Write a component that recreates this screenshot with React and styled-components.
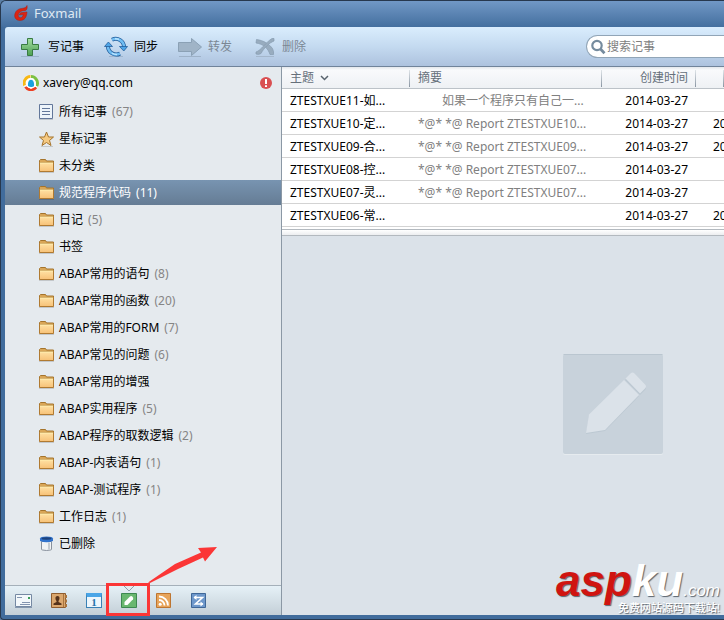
import React, { useState } from "react";
import styled, { createGlobalStyle, css } from "styled-components";

const GlobalStyle = createGlobalStyle`
  *, *::before, *::after { box-sizing: border-box; }
  body {
    margin: 0;
    background: #5b7fa6;
    font: 12px/16px "Noto Sans", "Noto Sans CJK SC", sans-serif;
    color: #000;
  }
  button, input { font: inherit; color: inherit; }
`;

/* window frame */
const Window = styled.div`
  position: relative;
  display: flex;
  flex-direction: column;
  min-height: 100vh;
  overflow: hidden;
  padding: 0 0 4px 4px;
  border: solid #27384e;
  border-width: 1px 0 1px 1px;
  border-radius: 6px 0 0 4px;
  background: #416c9c;
`;

const TitleBar = styled.header`
  display: flex;
  align-items: center;
  gap: 5px;
  height: 26px;
  margin-left: -4px;
  padding: 0 0 2px 12px;
  background: linear-gradient(#7198c6, #446f9f);
`;

const Title = styled.h1`
  margin: 0;
  font-size: 13px;
  font-weight: 400;
  color: #dfe9f3;
`;

/* toolbar */
const Toolbar = styled.div`
  display: flex;
  align-items: center;
  gap: 20px;
  height: 40px;
  padding-left: 13px;
  border-bottom: 1px solid #70839a;
  border-top-left-radius: 3px;
  background: linear-gradient(#daedfd, #c4daf0 50%, #adc2de);
`;

const ToolButton = styled.button`
  display: flex;
  align-items: center;
  gap: 6px;
  padding: 0;
  border: 0;
  background: none;
  white-space: nowrap;
  &:disabled { color: #7b8794; }
`;

const SearchBox = styled.label`
  display: flex;
  align-items: center;
  width: 138px;
  height: 23px;
  margin-left: auto;
  padding-left: 4px;
  border: 1px solid #91a5b7;
  border-right: 0;
  border-radius: 12px 0 0 12px;
  background: #fff;
`;

const SearchInput = styled.input`
  flex: 1;
  min-width: 0;
  padding: 0;
  border: 0;
  outline: 0;
  background: none;
  &::placeholder { color: #808080; opacity: 1; }
`;

/* body */
const Body = styled.div`
  display: flex;
  flex: 1;
`;

const Sidebar = styled.aside`
  display: flex;
  flex-direction: column;
  flex: 0 0 277px;
  border-right: 1px solid #8b98a5;
  background: #e5eaee;
`;

const Account = styled.div`
  display: flex;
  align-items: center;
  gap: 4px;
  height: 32px;
  padding: 0 9px 0 18px;
`;

const AccountName = styled.span`
  flex: 1;
`;

const FolderList = styled.ul`
  display: flex;
  flex-direction: column;
  gap: 2px;
  flex: 1;
  margin: 0;
  padding: 0;
  list-style: none;
`;

const Count = styled.span`
  margin-left: 1px;
  color: #858585;
`;

const FolderButton = styled.button`
  display: flex;
  align-items: center;
  gap: 4px;
  width: 100%;
  height: 25px;
  padding: 0 0 0 34px;
  border: 0;
  background: none;
  text-align: left;

  ${(p) => p.$active && css`
    background: linear-gradient(#7894b1, #657c94);
    color: #fff;
    ${Count} { color: #fff; }
  `}
`;

const ModuleBar = styled.nav`
  display: flex;
  align-items: center;
  gap: 11px;
  height: 30px;
  padding-left: 7px;
  border-top: 1px solid #a5b0b9;
  background: linear-gradient(#e6f1f7, #c3cfd7);
`;

const ModuleButton = styled.button`
  position: relative;
  display: grid;
  place-items: center;
  width: 24px;
  height: 29px;
  padding: 0;
  border: 0;
  background: none;
`;

const Notch = styled.svg`
  position: absolute;
  top: 0;
  left: 6px;
`;

/* red call-out laid over the active module */
const Highlight = styled.span`
  position: absolute;
  inset: -3px -9px -1px -11px;
  border: 3px solid #fb3636;
`;

const Arrow = styled.svg`
  position: absolute;
  left: 31px;
  bottom: 31px;
`;

/* note list */
const Main = styled.main`
  display: flex;
  flex: 1;
  flex-direction: column;
  min-width: 0;
  background: #dbe2e9;
`;

const NoteTable = styled.table`
  width: 100%;
  table-layout: fixed;
  border-collapse: separate;
  border-spacing: 0;
  background: #fff;
`;

const Col = styled.col`
  width: ${(p) => p.$width || "auto"};
`;

const HeadCell = styled.th`
  height: 22px;
  padding: 0 8px;
  border-bottom: 1px solid #bcc2c8;
  background:
    linear-gradient(#dfe4e8, #8995a2) no-repeat right 3px / 1px 17px,
    linear-gradient(#e3e7eb, #f9fafc 3px, #eef1f4);
  font-weight: 400;
  text-align: ${(p) => p.$align || "left"};
  color: #66707a;
`;

const SortButton = styled.button`
  display: flex;
  align-items: center;
  gap: 6px;
  padding: 0;
  border: 0;
  background: none;
`;

const Cell = styled.td`
  height: 23px;
  padding: 2px 8px 0;
  overflow: hidden;
  border-bottom: 1px solid #d3d3d3;
  white-space: nowrap;
  text-align: ${(p) => p.$align || "left"};
  color: ${(p) => (p.$muted ? "#808080" : "#000")};
`;

const ModifiedCell = styled(Cell)`
  padding: 2px 0 0 17px;
`;

const Splitter = styled.div`
  height: 7px;
  margin-top: 2px;
  border: solid #b3b9bf;
  border-width: 1px 0;
  background: linear-gradient(#fff, #eceef0);
`;

const ListArea = styled.div`
  background: #fff;
`;

const Preview = styled.section`
  display: grid;
  flex: 1;
  place-items: center;
  padding: 0 0 42px 220px;
`;

const Watermark = styled.div`
  position: absolute;
  right: 4px;
  bottom: 4px;
  display: flex;
  flex-direction: column;
  align-items: flex-end;
  font-family: "Liberation Sans", "Noto Sans CJK SC", sans-serif;
  color: #fff;
  text-shadow: 1px 1px 1px #59636d;
`;

const Brand = styled.div`
  font-size: 44px;
  line-height: 20px;
  font-weight: 700;
  font-style: italic;
`;

const BrandRed = styled.span`
  color: #d01410;
`;

const BrandSmall = styled.span`
  font-size: 17px;
  font-weight: 400;
`;

const Slogan = styled.div`
  position: relative;
  font-size: 11px;
  line-height: 14px;
  font-weight: 500;
`;

/* icons */
const FoxLogo = () => (
  <svg width="16" height="16" viewBox="0 0 16 16" aria-hidden="true">
    <path d="M14 .5C13.500 2 12 3.200 9 3.400 5.500 3.500 3 5.500 2 8.500.800 12.500 3 15.500 7 15.500c4.500 0 6.500-3 7-8.500L7.500 7.800 6.300 10l4-.5c-.5 2.300-1.500 3.300-3 3.200C5 12.500 4.800 10 6 8c1.500-2.300 4-2.300 6.500-2.500C14 5 14.500 2.500 14 .5Z" fill="#dc2412" stroke="#b01c10" strokeWidth=".5" />
  </svg>
);

const PlusIcon = () => (
  <svg width="24" height="24" viewBox="0 0 24 24" aria-hidden="true">
    <defs>
      <linearGradient id="plus" x1="0" y1="0" x2="0" y2="1">
        <stop stopColor="#a3dda2" /><stop offset="1" stopColor="#4da152" />
      </linearGradient>
    </defs>
    <path d="M3 21.5h18" stroke="#9db4cd" />
    <path d="M9.5 3.5h5v6h6v5h-6v6h-5v-6h-6v-5h6z" fill="url(#plus)" stroke="#397a43" />
  </svg>
);

const SyncIcon = () => (
  <svg width="24" height="24" viewBox="0 0 24 24" aria-hidden="true">
    <path d="M5 21.5h14" stroke="#9db4cd" />
    <g fill="none">
      <path d="M8 4.7a8.3 8.3 0 0 1 12 7.6M16 18.6A8.3 8.3 0 0 1 4 11" stroke="#245f9c" strokeWidth="4" />
      <path d="M8 4.7a8.3 8.3 0 0 1 12 7.6M16 18.6A8.3 8.3 0 0 1 4 11" stroke="#70bdf2" strokeWidth="2.4" />
      <path d="M11 3.8a8 8 0 0 1 4 .6M13 19.4a8 8 0 0 1-5-1.4" stroke="#b9e4ff" strokeWidth="1.5" />
    </g>
    <path d="M15.5 11.5h8L19.8 16zM.5 11.5h8L4.4 7z" fill="#4da5e8" stroke="#245f9c" strokeWidth=".8" />
  </svg>
);

const ForwardIcon = () => (
  <svg width="24" height="24" viewBox="0 0 24 24" aria-hidden="true">
    <path d="M1 21.5h22" stroke="#9eb2c8" />
    <path d="M.5 7.500h13v-4l10 8.500-10 8.500v-4H.5z" fill="#a0b4c7" stroke="#8ba1b5" />
  </svg>
);

const DeleteIcon = () => (
  <svg width="24" height="24" viewBox="0 0 24 24" aria-hidden="true">
    <path d="M4 21.500h18" stroke="#a4b7cc" />
    <path d="M4.500 4.500C12 5.500 17 9 20.500 13.500q1.500 3 1 6h-3.500C16 13 11 9 4 8z" fill="#98acbf" stroke="#879cb0" strokeWidth=".7" />
    <path d="M20 3.500h2v2.500C17 8 12 13 9 18.500q-2.500 1.500-5 .5v-2C9 15.500 14 7 20 3.500z" fill="#98acbf" stroke="#879cb0" strokeWidth=".7" />
  </svg>
);

const SearchIcon = () => (
  <svg width="16" height="16" viewBox="0 0 16 16" aria-hidden="true">
    <circle cx="6" cy="6.500" r="4.700" fill="none" stroke="#758b9e" strokeWidth="2.200" />
    <path d="m9.500 10 4 4.200" stroke="#758b9e" strokeWidth="2.800" />
  </svg>
);

const MailLogo = () => (
  <svg width="16" height="16" viewBox="0 0 16 16" aria-hidden="true">
    <circle cx="8" cy="8" r="7.500" fill="#fff" />
    <g fill="none" strokeWidth="3">
      <path d="M1.600 10.500A6.500 6.500 0 0 1 7.500 1.600" stroke="#f8b814" />
      <path d="M8 1.600a6.500 6.500 0 0 1 5.700 9.500" stroke="#7dc142" />
      <path d="M2.500 11.800a6.500 6.500 0 0 0 10.500.500" stroke="#ed4023" />
    </g>
    <path d="M3.500 11.500C3.500 6 5 3 8 3s5 3 5 8.500L8 14z" fill="#fff" />
    <path d="M8 4.800c-2.400 0-3.300 3-3 6.200 1.500 1.400 4.700 1.400 6 0 .3-3.200-.6-6.200-3-6.200z" fill="#18a2df" />
  </svg>
);

const AlertIcon = () => (
  <svg width="12" height="12" viewBox="0 0 12 12" role="img" aria-label="错误">
    <circle cx="6" cy="6" r="6" fill="#d94f51" />
    <path d="M6 2v5M6 8.300v1.800" stroke="#fff" strokeWidth="2" />
  </svg>
);

const FolderIcon = () => (
  <svg width="16" height="16" viewBox="0 0 16 16" aria-hidden="true">
    <defs>
      <linearGradient id="folder" x1="0" y1="0" x2="0" y2="1">
        <stop stopColor="#ffe2a5" /><stop offset="1" stopColor="#f7c177" />
      </linearGradient>
    </defs>
    <path d="M0 14.500h15" stroke="#000" strokeOpacity=".15" />
    <path d="M.5 13V2.500l1-1h5l1 1.500h7v10z" fill="#d9a657" stroke="#a5742c" />
    <path d="M.5 4.500h14v9H.5z" fill="url(#folder)" stroke="#b07a31" />
    <path d="M1 5h13" stroke="#fff0b0" />
  </svg>
);

const NoteIcon = () => (
  <svg width="16" height="16" viewBox="0 0 16 16" aria-hidden="true">
    <path d="M.5.500h13v14H.5z" fill="#edf4fa" stroke="#62779a" />
    <path d="M3 4.500h8M3 7.500h8M3 10.500h8" stroke="#62779a" />
    <path d="M0 15.500h14" stroke="#bfc6cd" />
  </svg>
);

const StarIcon = () => (
  <svg width="16" height="16" viewBox="0 0 16 16" aria-hidden="true">
    <path d="M2 15.500h12" stroke="#c3c8cc" />
    <path d="m7.500 1 2 5h5l-4 3.500 1.500 5-4.500-3-4.500 3 1.500-5-4-3.500h5z" fill="#f5ca83" stroke="#a5742c" strokeLinejoin="round" />
  </svg>
);

const TrashIcon = () => (
  <svg width="16" height="16" viewBox="0 0 16 16" aria-hidden="true">
    <path d="M2.500 5.500v7.500q0 1 1 1 4 1 8 0 1 0 1-1V5.500z" fill="#f1f3f5" stroke="#88919d" />
    <path d="M10 6.500v7" stroke="#c5cbd2" strokeWidth="2" />
    <path d="M1 2.500Q1 .500 7.500.500T14 2.500V5q-6.500 2.500-13 0z" fill="#3274cd" />
    <ellipse cx="7.500" cy="2.500" rx="5" ry="1.200" fill="#1e437d" />
  </svg>
);

const MailIcon = () => (
  <svg width="18" height="16" viewBox="0 0 18 16" aria-hidden="true">
    <path d="M.5 1.500h16v12H.5z" fill="#f3f8fb" stroke="#7589a3" />
    <path d="M2 4.500h5M7 9.500h8M5 11.500h10" stroke="#8395b0" />
    <path d="M13 4h2v2h-2z" fill="#3b9f59" />
    <path d="M0 14.500h17" stroke="#8497ae" />
  </svg>
);

const ContactsIcon = () => (
  <svg width="16" height="16" viewBox="0 0 16 16" aria-hidden="true">
    <path d="M.5.500h14v14H.5z" fill="#dba76d" stroke="#8f5d2f" />
    <path d="M12.500 1v13" stroke="#a8743e" />
    <path d="M14 2h2v3h-2zM14 6.500h2v3h-2zM14 11h2v3h-2z" fill="#a8743e" />
    <path d="M6.500 3C4 3 4 6 5.500 8v1L2.500 10.500V12h8v-1.500L7.500 9V8C9 6 9 3 6.500 3z" fill="#56331b" />
  </svg>
);

const DayNumber = styled.span`
  display: grid;
  place-items: center;
  width: 16px;
  height: 15px;
  border: 1px solid #3981b5;
  border-top: 4px solid #4aa5e7;
  background: #edf6fc;
  font: 700 11px/10px "Liberation Serif", serif;
  color: #2674aa;
`;

const MemoIcon = () => (
  <svg width="16" height="16" viewBox="0 0 16 16" aria-hidden="true">
    <path d="M.5.500h15v14H.5z" fill="#69b770" stroke="#3d8851" />
    <path d="M3.500 12V9L9 3.500q1.200-1 2.500.2t.5 2.600L6.500 12z" fill="#fff" />
  </svg>
);

const RssIcon = () => (
  <svg width="16" height="16" viewBox="0 0 16 16" aria-hidden="true">
    <path d="M.5.500h14v14H.5z" fill="#e7a45a" stroke="#bd7531" />
    <circle cx="4.200" cy="11.200" r="1.500" fill="#fff" />
    <path d="M3 7a5.500 5.500 0 0 1 5.500 5.500M3 3.500a9 9 0 0 1 9 9" fill="none" stroke="#fff" strokeWidth="1.800" />
  </svg>
);

const ExchangeIcon = () => (
  <svg width="16" height="16" viewBox="0 0 16 16" aria-hidden="true">
    <path d="M.5.500h14v14H.5z" fill="#6e98cb" stroke="#3f6798" />
    <path d="M3 4.500h8.500l-7 6.500H12" fill="none" stroke="#fff" strokeWidth="1.600" />
    <path d="M2.500 4.500 5.500 2v5zM12.500 11l-3-2.500v5z" fill="#fff" />
  </svg>
);

const PreviewIcon = () => (
  <svg width="100" height="101" viewBox="0 0 100 101" aria-hidden="true">
    <rect width="100" height="101" rx="2" fill="#e6ebef" />
    <rect width="100" height="100" rx="2" fill="#c8d2db" />
    <path d="M.5.500h99" stroke="#bac6d0" />
    <g fill="#bcc8d2">
      <path d="M26 62 61 27l15 15-34 35-19 3z" />
      <path d="m62 26 5-5q2-2 4 0l11 11q2 2 0 4l-5 5z" />
    </g>
    <g fill="#dbe2e9">
      <path d="M26 60.500 61 26l15 15-34 35-19 3z" />
      <path d="m62.500 24.500 5-5q2-2 4 0L82 30.500q2 2 0 4l-5 5z" />
    </g>
  </svg>
);

const folders = [
  { name: "所有记事", count: 67, Icon: NoteIcon },
  { name: "星标记事", Icon: StarIcon },
  { name: "未分类" },
  { name: "规范程序代码", count: 11 },
  { name: "日记", count: 5 },
  { name: "书签" },
  { name: "ABAP常用的语句", count: 8 },
  { name: "ABAP常用的函数", count: 20 },
  { name: "ABAP常用的FORM", count: 7 },
  { name: "ABAP常见的问题", count: 6 },
  { name: "ABAP常用的增强" },
  { name: "ABAP实用程序", count: 5 },
  { name: "ABAP程序的取数逻辑", count: 2 },
  { name: "ABAP-内表语句", count: 1 },
  { name: "ABAP-测试程序", count: 1 },
  { name: "工作日志", count: 1 },
  { name: "已删除", Icon: TrashIcon },
];

const notes = [
  { title: "ZTESTXUE11-如...", summary: "\u3000\u3000如果一个程序只有自己一...", created: "2014-03-27" },
  { title: "ZTESTXUE10-定...", summary: "*@* *@ Report ZTESTXUE10...", created: "2014-03-27", modified: "2014-03-27" },
  { title: "ZTESTXUE09-合...", summary: "*@* *@ Report ZTESTXUE09...", created: "2014-03-27", modified: "2014-03-27" },
  { title: "ZTESTXUE08-控...", summary: "*@* *@ Report ZTESTXUE07...", created: "2014-03-27" },
  { title: "ZTESTXUE07-灵...", summary: "*@* *@ Report ZTESTXUE07...", created: "2014-03-27" },
  { title: "ZTESTXUE06-常...", summary: "", created: "2014-03-27", modified: "2014-03-27" },
];

const tools = [
  { label: "写记事", Icon: PlusIcon },
  { label: "同步", Icon: SyncIcon },
  { label: "转发", Icon: ForwardIcon, disabled: true },
  { label: "删除", Icon: DeleteIcon, disabled: true },
];

const modules = [
  { label: "邮件", Icon: MailIcon },
  { label: "联系人", Icon: ContactsIcon },
  { label: "日历", Icon: () => <DayNumber>1</DayNumber> },
  { label: "记事", Icon: MemoIcon, active: true },
  { label: "订阅", Icon: RssIcon },
  { label: "同步", Icon: ExchangeIcon },
];

function FolderTree() {
  const [selected, setSelected] = useState("规范程序代码");
  return (
    <FolderList>
      {folders.map(({ name, count, Icon = FolderIcon }) => (
        <li key={name}>
          <FolderButton type="button" $active={name === selected} onClick={() => setSelected(name)}>
            <Icon />
            <span>{name}</span>
            {count && <Count>({count})</Count>}
          </FolderButton>
        </li>
      ))}
    </FolderList>
  );
}

function Modules() {
  return (
    <ModuleBar>
      {modules.map(({ label, Icon, active }) => (
        <ModuleButton key={label} type="button" aria-label={label}>
          <Icon />
          {active && (
            <>
              <Notch width="12" height="6" viewBox="0 0 12 6" aria-hidden="true">
                <path d="M1 0l5 5 5-5" fill="#e5eaee" stroke="#909ea9" />
              </Notch>
              <Highlight />
              <Arrow width="70" height="40" viewBox="0 0 70 40" aria-hidden="true">
                <path d="M0 38.500 27 20 53 8.500 50 4 69 3 57 17.500 55 13.500 30 25 2 39z" fill="#fb3636" />
              </Arrow>
            </>
          )}
        </ModuleButton>
      ))}
    </ModuleBar>
  );
}

function NoteList() {
  return (
    <ListArea>
      <NoteTable>
        <colgroup>
          <Col $width="128px" />
          <Col $width="192px" />
          <Col $width="94px" />
          <Col />
        </colgroup>
        <thead>
          <tr>
            <HeadCell>
              <SortButton type="button">
                主题
                <svg width="9" height="6" viewBox="0 0 9 6" aria-hidden="true">
                  <path d="m1 1 3.500 3.500L8 1" fill="none" stroke="#59636d" strokeWidth="1.500" />
                </svg>
              </SortButton>
            </HeadCell>
            <HeadCell>摘要</HeadCell>
            <HeadCell $align="right">创建时间</HeadCell>
            <HeadCell aria-label="修改时间" />
          </tr>
        </thead>
        <tbody>
          {notes.map((note) => (
            <tr key={note.title}>
              <Cell>{note.title}</Cell>
              <Cell $muted>{note.summary}</Cell>
              <Cell $align="right">{note.created}</Cell>
              <ModifiedCell>{note.modified}</ModifiedCell>
            </tr>
          ))}
        </tbody>
      </NoteTable>
      <Splitter />
    </ListArea>
  );
}

export default function App() {
  return (
    <>
      <GlobalStyle />
      <Window>
        <TitleBar>
          <FoxLogo />
          <Title>Foxmail</Title>
        </TitleBar>
        <Toolbar>
          {tools.map(({ label, Icon, disabled }) => (
            <ToolButton key={label} type="button" disabled={disabled}>
              <Icon />
              {label}
            </ToolButton>
          ))}
          <SearchBox>
            <SearchIcon />
            <SearchInput type="search" placeholder="搜索记事" aria-label="搜索记事" />
          </SearchBox>
        </Toolbar>
        <Body>
          <Sidebar>
            <Account>
              <MailLogo />
              <AccountName>xavery@qq.com</AccountName>
              <AlertIcon />
            </Account>
            <FolderTree />
            <Modules />
          </Sidebar>
          <Main>
            <NoteList />
            <Preview>
              <PreviewIcon />
            </Preview>
          </Main>
        </Body>
        <Watermark>
          <Brand>
            <BrandRed>asp</BrandRed>ku<BrandSmall>.com</BrandSmall>
          </Brand>
          <Slogan>免费网站源码下载站!</Slogan>
        </Watermark>
      </Window>
    </>
  );
}
